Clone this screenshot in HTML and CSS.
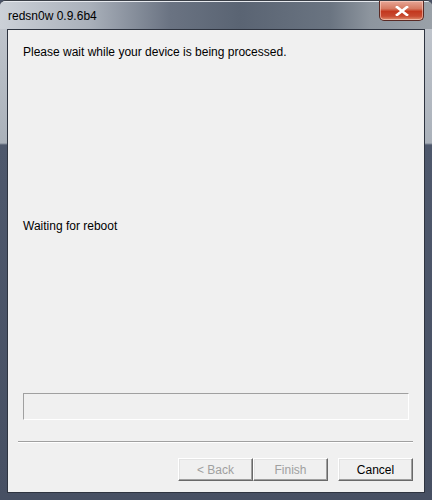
FILE: index.html
```html
<!DOCTYPE html>
<html>
<head>
<meta charset="utf-8">
<link rel="stylesheet" href="styles.css">
</head>
<body>
<div class="window">
  <div class="titlebar">
    <span class="title">redsn0w 0.9.6b4</span>
    <div class="close">
      <svg width="14" height="10" viewBox="0 0 14 10"><path d="M2 1 L12 9 M12 1 L2 9" stroke="#fff" stroke-width="2.6" stroke-linecap="square"/></svg>
    </div>
  </div>
  <div class="client">
    <div class="msg">Please wait while your device is being processed.</div>
    <div class="status">Waiting for reboot</div>
    <div class="progress"></div>
    <div class="separator"></div>
    <div class="buttons">
      <button class="btn disabled">&lt; Back</button>
      <button class="btn disabled">Finish</button>
      <button class="btn cancel">Cancel</button>
    </div>
  </div>
</div>
</body>
</html>
```

FILE: styles.css
```css
html, body {
  margin: 0;
  padding: 0;
  background: #4a5366;
}
.window {
  width: 432px;
  height: 500px;
  box-sizing: border-box;
  border-top: 1px solid #3a3f47;
  border-radius: 6px 6px 0 0;
  overflow: hidden;
  background: linear-gradient(to bottom, #c4c9d0 0, #aab1ba 142px, #4e586c 144px, #475063 100%);
  font-family: "Liberation Sans", Arial, sans-serif;
  font-size: 12px;
  color: #000;
  display: flex;
  flex-direction: column;
}
.titlebar {
  height: 28px;
  display: flex;
  align-items: flex-start;
  border-top: 1px solid #e6e9ee;
  background: linear-gradient(to right, #ccd1d8 0, #a9b0ba 90px, #6a7382 170px, #5a6473 240px, #6a7481 330px, #8d959e 370px, #9aa1a8 432px);
}
.title {
  margin-left: 8px;
  margin-top: 7px;
  line-height: 14px;
  color: #000;
}
.close {
  margin-left: auto;
  margin-right: 8px;
  margin-top: -1px;
  width: 45px;
  height: 20px;
  box-sizing: border-box;
  border: 1px solid #5a2a24;
  border-top: none;
  border-radius: 0 0 5px 5px;
  box-shadow: inset 0 0 0 1px rgba(255, 220, 210, 0.55);
  background: linear-gradient(to bottom, #e7a696 0, #d67a62 40%, #c3381e 55%, #c84a30 80%, #e09070 100%);
  display: flex;
  align-items: center;
  justify-content: center;
}
.close svg {
  display: block;
}
.client {
  margin: 0 7px 7px 7px;
  flex: 1;
  box-sizing: border-box;
  border: 1px solid #2e3440;
  background: #f0f0f0;
  padding: 0 10px 11px 15px;
  display: flex;
  flex-direction: column;
  position: relative;
}
.msg {
  margin-top: 15px;
  line-height: 15px;
}
.status {
  margin-top: 159px;
  line-height: 15px;
}
.progress {
  margin-top: 159px;
  width: 386px;
  height: 27px;
  box-sizing: border-box;
  border-top: 1px solid #a0a0a0;
  border-left: 1px solid #a0a0a0;
  border-bottom: 1px solid #ffffff;
  border-right: 1px solid #ffffff;
}
.separator {
  margin-top: 21px;
  margin-left: -5px;
  width: 395px;
  height: 1px;
  background: #a0a0a0;
  border-bottom: 1px solid #ffffff;
}
.buttons {
  margin-top: 15px;
  display: flex;
  justify-content: flex-end;
  padding-right: 1px;
}
.btn {
  width: 75px;
  height: 23px;
  box-sizing: border-box;
  font-family: "Liberation Sans", Arial, sans-serif;
  font-size: 12px;
  background: #f0f0f0;
  border-top: 1px solid #ffffff;
  border-left: 1px solid #ffffff;
  border-right: 1px solid #696969;
  border-bottom: 1px solid #696969;
  box-shadow: inset -1px -1px 0 #a0a0a0, inset 1px 1px 0 #e3e3e3;
  padding: 0;
  color: #000;
}
.btn.disabled {
  color: #a0a0a0;
}
.cancel {
  margin-left: 10px;
}
```
